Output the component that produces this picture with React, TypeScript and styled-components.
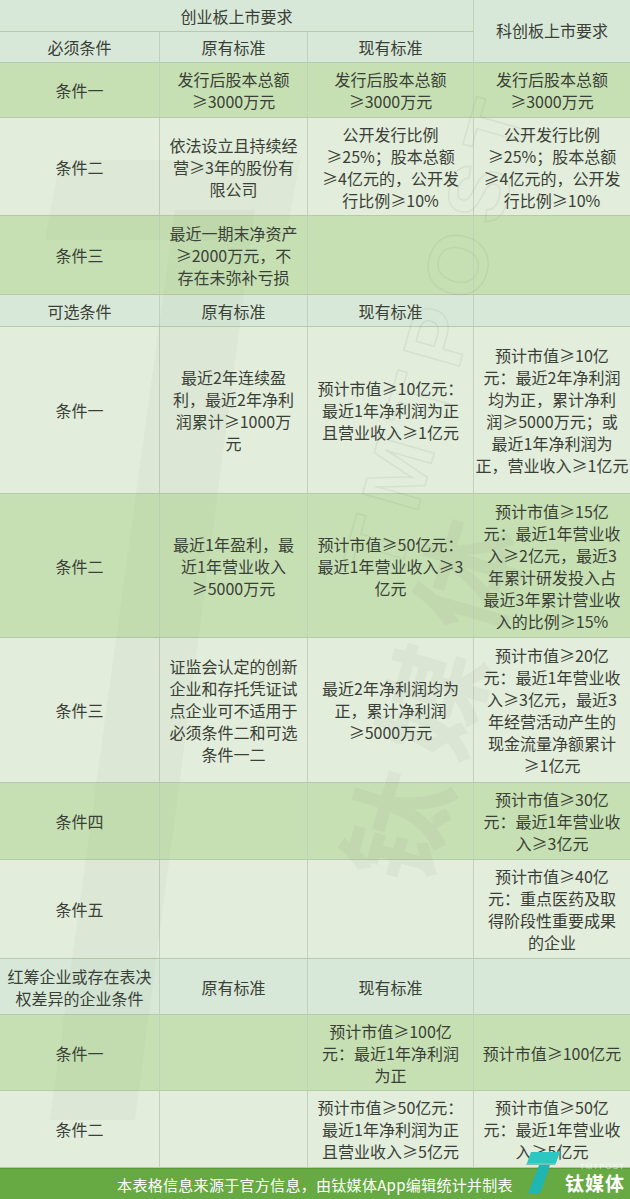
import React from "react";
import styled, { createGlobalStyle } from "styled-components";

const GlobalStyle = createGlobalStyle`
  html, body {
    margin: 0;
    padding: 0;
    background: #e2eddb;
  }
  * { box-sizing: border-box; }
  body {
    font-family: "Noto Sans CJK SC", "Noto Sans", sans-serif;
    color: #3a4037;
  }
`;

type Tone = "head" | "dark" | "light";

const toneBg: Record<Tone, string> = {
  head: "#d8e8d8",
  dark: "#c7e0b3",
  light: "#e2eddb",
};

const COLS = "160px 148px 166px 156px";

const Page = styled.div`
  position: relative;
  width: 630px;
  height: 1199px;
  overflow: hidden;
  display: flex;
  flex-direction: column;
`;

const HeaderBlock = styled.div`
  display: grid;
  grid-template-columns: ${COLS};
  grid-template-rows: 32px 30px;
  background: ${toneBg.head};
  border-bottom: 1px solid #b6caae;
`;

const TopTitle = styled.div`
  grid-column: 1 / span 3;
  grid-row: 1;
  display: flex;
  align-items: center;
  justify-content: center;
  font-size: 16px;
  border-right: 1px solid #c0d3b8;
  border-bottom: 1px solid #b6caae;
`;

const SideTitle = styled.div`
  grid-column: 4;
  grid-row: 1 / span 2;
  display: flex;
  align-items: center;
  justify-content: center;
  font-size: 16px;
  padding-bottom: 2px;
`;

const Row = styled.div<{ $tone: Tone; $h: number }>`
  display: grid;
  grid-template-columns: ${COLS};
  height: ${(p) => p.$h}px;
  background: ${(p) => toneBg[p.$tone]};
  border-bottom: 1px solid #b6caae;
  flex: none;
`;

const Cell = styled.div<{ $last?: boolean }>`
  display: flex;
  flex-direction: column;
  align-items: center;
  justify-content: center;
  text-align: center;
  font-size: 16px;
  line-height: 22px;
  border-right: ${(p) => (p.$last ? "none" : "1px solid #c0d3b8")};
  overflow: visible;
  min-width: 0;
`;

const Line = styled.span`
  display: block;
  white-space: nowrap;
`;

const Footer = styled.div`
  flex: none;
  height: 32px;
  background: #67a943;
  border-top: 1px solid #5a9a38;
  color: #ffffff;
  font-size: 15px;
  display: flex;
  align-items: center;
  justify-content: center;
  letter-spacing: 0.3px;
`;

const Watermark = styled.div`
  position: absolute;
  inset: 0 0 32px 0;
  pointer-events: none;
  overflow: hidden;
`;

const WmText = styled.span<{ $x: number; $y: number; $size: number; $outline?: boolean }>`
  position: absolute;
  left: ${(p) => p.$x}px;
  top: ${(p) => p.$y}px;
  transform: translate(-50%, -50%) rotate(-74deg);
  font-family: "Liberation Sans", "Noto Sans CJK SC", sans-serif;
  font-weight: 700;
  font-size: ${(p) => p.$size}px;
  white-space: nowrap;
  letter-spacing: ${(p) => (p.$outline ? "14px" : "20px")};
  color: ${(p) => (p.$outline ? "transparent" : "rgba(95, 105, 95, 0.06)")};
  -webkit-text-stroke: ${(p) => (p.$outline ? "1.5px rgba(110, 120, 110, 0.10)" : "0")};
`;

const WmShape = styled.svg`
  position: absolute;
  left: 0;
  top: 0;
`;

const Logo = styled.div`
  position: absolute;
  right: 5px;
  bottom: 4px;
  display: flex;
  align-items: flex-end;
  gap: 4px;
`;

const LogoWords = styled.div`
  display: flex;
  flex-direction: column;
  align-items: flex-end;
  color: #ffffff;
`;

const LogoSmall = styled.span`
  font-family: "Liberation Sans", sans-serif;
  font-size: 8px;
  letter-spacing: 1px;
  color: rgba(255, 255, 255, 0.65);
  line-height: 9px;
`;

const LogoBig = styled.span`
  font-size: 19px;
  font-weight: 700;
  line-height: 24px;
  letter-spacing: 1px;
`;

type RowData = { tone: Tone; h: number; cells: string[][] };

const rows: RowData[] = [
  {
    tone: "dark",
    h: 55,
    cells: [["条件一"], ["发行后股本总额", "≥3000万元"], ["发行后股本总额", "≥3000万元"], ["发行后股本总额", "≥3000万元"]],
  },
  {
    tone: "light",
    h: 98,
    cells: [
      ["条件二"],
      ["依法设立且持续经", "营≥3年的股份有", "限公司"],
      ["公开发行比例", "≥25%；股本总额", "≥4亿元的，公开发", "行比例≥10%"],
      ["公开发行比例", "≥25%；股本总额", "≥4亿元的，公开发", "行比例≥10%"],
    ],
  },
  {
    tone: "dark",
    h: 79,
    cells: [["条件三"], ["最近一期末净资产", "≥2000万元，不", "存在未弥补亏损"], [], []],
  },
  { tone: "head", h: 32, cells: [["可选条件"], ["原有标准"], ["现有标准"], []] },
  {
    tone: "light",
    h: 167,
    cells: [
      ["条件一"],
      ["最近2年连续盈", "利，最近2年净利", "润累计≥1000万", "元"],
      ["预计市值≥10亿元：", "最近1年净利润为正", "且营业收入≥1亿元"],
      ["预计市值≥10亿", "元：最近2年净利润", "均为正，累计净利", "润≥5000万元；或", "最近1年净利润为", "正，营业收入≥1亿元"],
    ],
  },
  {
    tone: "dark",
    h: 144,
    cells: [
      ["条件二"],
      ["最近1年盈利，最", "近1年营业收入", "≥5000万元"],
      ["预计市值≥50亿元：", "最近1年营业收入≥3", "亿元"],
      ["预计市值≥15亿", "元：最近1年营业收", "入≥2亿元，最近3", "年累计研发投入占", "最近3年累计营业收", "入的比例≥15%"],
    ],
  },
  {
    tone: "light",
    h: 145,
    cells: [
      ["条件三"],
      ["证监会认定的创新", "企业和存托凭证试", "点企业可不适用于", "必须条件二和可选", "条件一二"],
      ["最近2年净利润均为", "正，累计净利润", "≥5000万元"],
      ["预计市值≥20亿", "元：最近1年营业收", "入≥3亿元，最近3", "年经营活动产生的", "现金流量净额累计", "≥1亿元"],
    ],
  },
  {
    tone: "dark",
    h: 77,
    cells: [["条件四"], [], [], ["预计市值≥30亿", "元：最近1年营业收", "入≥3亿元"]],
  },
  {
    tone: "light",
    h: 99,
    cells: [["条件五"], [], [], ["预计市值≥40亿", "元：重点医药及取", "得阶段性重要成果", "的企业"]],
  },
  {
    tone: "head",
    h: 56,
    cells: [["红筹企业或存在表决", "权差异的企业条件"], ["原有标准"], ["现有标准"], []],
  },
  {
    tone: "dark",
    h: 76,
    cells: [["条件一"], [], ["预计市值≥100亿", "元：最近1年净利润", "为正"], ["预计市值≥100亿元"]],
  },
  {
    tone: "light",
    h: 77,
    cells: [
      ["条件二"],
      [],
      ["预计市值≥50亿元：", "最近1年净利润为正", "且营业收入≥5亿元"],
      ["预计市值≥50亿", "元：最近1年营业收", "入≥5亿元"],
    ],
  },
];

function LogoMark() {
  return (
    <svg width="38" height="44" viewBox="0 0 38 44" aria-hidden="true">
      <polygon points="8,1 37,1 33,12 4,12" fill="#2cc7c3" />
      <polygon points="16,14 27,14 17,43 5,43" fill="#1fb5b3" />
      <polygon points="4,12 33,12 32,14 3,14" fill="#178f8e" opacity="0.5" />
    </svg>
  );
}

export default function App() {
  return (
    <>
      <GlobalStyle />
      <Page>
        <HeaderBlock>
          <TopTitle>创业板上市要求</TopTitle>
          <SideTitle>科创板上市要求</SideTitle>
          <Cell style={{ gridColumn: 1, gridRow: 2 }}>必须条件</Cell>
          <Cell style={{ gridColumn: 2, gridRow: 2 }}>原有标准</Cell>
          <Cell style={{ gridColumn: 3, gridRow: 2 }}>现有标准</Cell>
        </HeaderBlock>
        {rows.map((r, i) => (
          <Row key={i} $tone={r.tone} $h={r.h}>
            {r.cells.map((c, j) => (
              <Cell key={j} $last={j === 3}>
                {c.map((l, k) => (
                  <Line key={k}>{l}</Line>
                ))}
              </Cell>
            ))}
          </Row>
        ))}
        <Footer>本表格信息来源于官方信息，由钛媒体App编辑统计并制表</Footer>
        <Watermark>
          <WmShape width="630" height="1167" viewBox="0 0 630 1167">
            <polygon points="175,210 255,210 135,1120 50,1120" fill="rgba(95,105,95,0.045)" />
            <polygon points="60,160 300,160 285,240 45,240" fill="rgba(95,105,95,0.035)" />
          </WmShape>
          <WmText $x={440} $y={330} $size={84} $outline>
            TMTPOST
          </WmText>
          <WmText $x={430} $y={690} $size={110}>
            钛媒体
          </WmText>
        </Watermark>
        <Logo>
          <LogoMark />
          <LogoWords>
            <LogoSmall>TMTPOST</LogoSmall>
            <LogoBig>钛媒体</LogoBig>
          </LogoWords>
        </Logo>
      </Page>
    </>
  );
}
